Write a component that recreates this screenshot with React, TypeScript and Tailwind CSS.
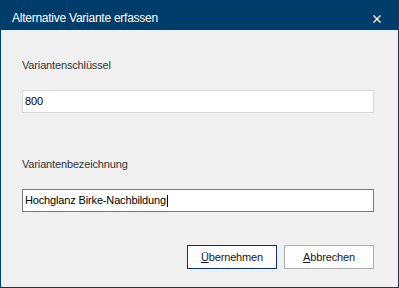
import React from "react";

export default function App() {
  const font = { fontFamily: '"Liberation Sans", Arial, sans-serif' };
  return (
    <div className="w-[399px] h-[288px] bg-[#003d6b] flex flex-col" style={font}>
      <div className="h-[30px] flex items-start pl-[12px] shrink-0">
        <div className="pt-[10px] text-[12px] leading-[16px] tracking-[-0.25px] text-white">
          Alternative Variante erfassen
        </div>
        <svg
          className="ml-auto mr-[18px] mt-[15px]"
          width="8"
          height="8"
          viewBox="0 0 8 8"
          fill="none"
          stroke="white"
          strokeWidth="1.4"
        >
          <path d="M0.5 0.5 L7.5 7.5 M7.5 0.5 L0.5 7.5" />
        </svg>
      </div>
      <div className="flex-1 mx-[1px] mb-[1px] bg-[#f0f0f0] pl-[21px] pr-[24px] pt-[29px] flex flex-col text-[11px] tracking-[-0.15px]">
        <div className="leading-[13px] h-[13px] text-[#333333]">Variantenschlüssel</div>
        <div className="mt-[18px] h-[23px] border border-[#d9d9d9] bg-white flex items-center pl-[2px] text-black leading-[13px]">
          800
        </div>
        <div className="mt-[45px] leading-[13px] h-[13px] text-[#333333]">Variantenbezeichnung</div>
        <div className="mt-[18px] h-[23px] border border-[#7a7a7a] bg-white flex items-center pl-[2px] text-black leading-[13px]">
          <span>Hochglanz Birke-Nachbildung</span>
          <span className="inline-block w-[1px] h-[12px] bg-black ml-[1px]" />
        </div>
        <div className="mt-[33px] flex justify-end gap-[7px]">
          <div className="w-[90px] h-[24px] border border-[#0a3560] bg-[#fdfdfd] flex items-center justify-center leading-[13px] text-[#1a1a1a]">
            <span>
              <span className="underline">Ü</span>bernehmen
            </span>
          </div>
          <div className="w-[90px] h-[24px] border border-[#adadad] bg-[#fdfdfd] flex items-center justify-center leading-[13px] text-[#1a1a1a]">
            <span>
              <span className="underline">A</span>bbrechen
            </span>
          </div>
        </div>
      </div>
    </div>
  );
}
